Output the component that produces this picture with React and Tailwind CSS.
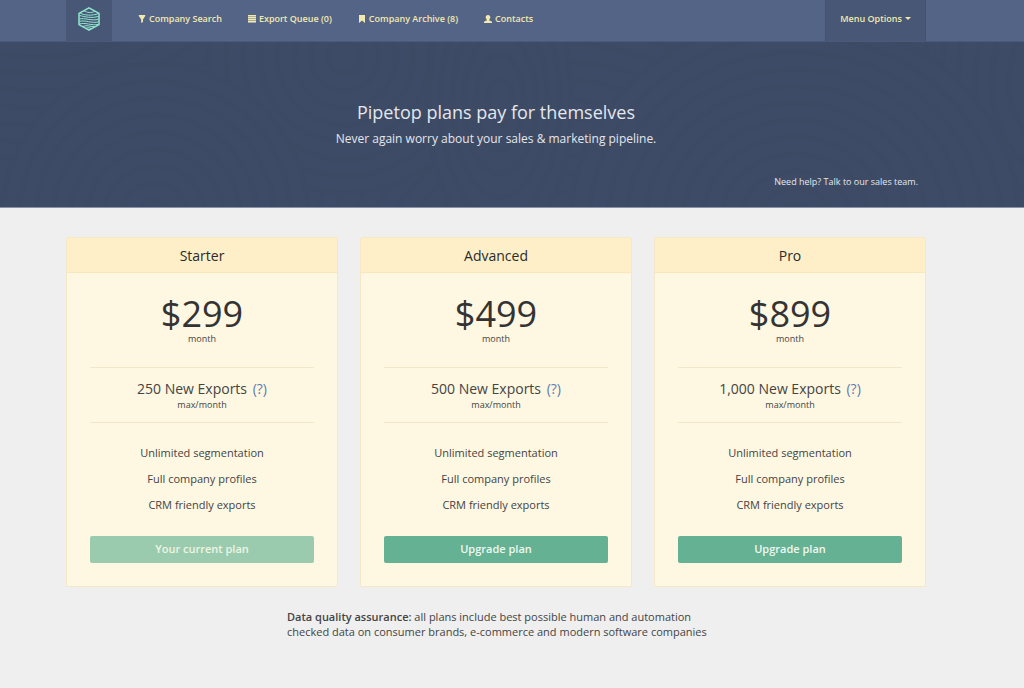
import React from 'react';

const navItems = [
  { label: 'Company Search', icon: 'filter' },
  { label: 'Export Queue (0)', icon: 'list' },
  { label: 'Company Archive (8)', icon: 'bookmark' },
  { label: 'Contacts', icon: 'user' },
];

const plans = [
  { name: 'Starter', price: '$299', exports: '250', current: true },
  { name: 'Advanced', price: '$499', exports: '500', current: false },
  { name: 'Pro', price: '$899', exports: '1,000', current: false },
];

const features = ['Unlimited segmentation', 'Full company profiles', 'CRM friendly exports'];

// Later groups are painted over earlier ones
const swirls = [
  { cx: 560, cy: 300, rx: 1, ry: 1.1, rings: 17 },
  { cx: 40, cy: -70, rx: 1.6, ry: 1, rings: 11 },
  { cx: 1060, cy: 40, rx: 1, ry: 1.4, rings: 10 },
  { cx: 345, cy: 15, rx: 1, ry: 1, rings: 8 },
  { cx: 500, cy: 60, rx: 0.7, ry: 1.4, rings: 6 },
  { cx: 155, cy: 175, rx: 1, ry: 1, rings: 9 },
  { cx: 795, cy: 180, rx: 1.1, ry: 1, rings: 12 },
];

const NavIcon = ({ name }) => {
  if (name === 'filter') {
    return (
      <svg className="w-2 h-2 fill-current" viewBox="0 0 8 8" aria-hidden="true">
        <path d="M0.8 0h6.4v1L5 4.5V7L3.2 8V4.5L0.8 1z" />
      </svg>
    );
  }
  if (name === 'list') {
    return (
      <svg className="w-2 h-2 fill-current" viewBox="0 0 8 8" aria-hidden="true">
        <path d="M0 0h8v8H0z" opacity="0.55" />
        <path d="M0 0h8v1H0zM0 2h8v1H0zM0 4h8v1H0zM0 6h8v1H0z" />
      </svg>
    );
  }
  if (name === 'bookmark') {
    return (
      <svg className="w-2 h-2 fill-current" viewBox="0 0 8 8" aria-hidden="true">
        <path d="M1 0h6v8L4 5.6L1 8z" />
      </svg>
    );
  }
  return (
    <svg className="w-2 h-2 fill-current" viewBox="0 0 8 8" aria-hidden="true">
      <path d="M4 0C5.6 0 6.3 1 6.3 2.3C6.3 3.4 5.8 4 5.3 4.6V5.5C6.5 6 8 6.2 8 7.2V8H0V7.2C0 6.2 1.5 6 2.7 5.5V4.6C2.2 4 1.7 3.4 1.7 2.3C1.7 1 2.4 0 4 0z" />
    </svg>
  );
};

const Logo = () => (
  <svg className="w-6 h-6" viewBox="0 0 24 24" fill="none" stroke="#92e8cf" aria-hidden="true">
    <path d="M12 0.8L22 6.3V17.7L12 23.2L2 17.7V6.3z" strokeWidth="1.5" strokeLinejoin="round" />
    <path d="M7 3.8C10 5.6 14 6.2 18 4.4M3 6C7 8.4 15 9 21.5 6.6M2.5 8.4C8 10 15 11.4 21.5 9.4M2.5 12C7 10.4 15 14.4 21.5 12.2M2.5 14.4C8 12.6 15 16.8 21.5 14.8M2.5 17C8 15 15 19 21 17.4M6 19.4C10 17.6 14 20 17.6 19.6M9 21.2C11 20.4 13 21 14.6 21.4" strokeWidth="1" />
  </svg>
);

const Navbar = () => (
  <nav className="bg-[#546487] border-b border-[#4b5a7c] pr-8 text-[9px] font-semibold text-[#f2e9ae]">
    <div className="max-w-[860px] mx-auto h-[41px] flex items-stretch">
      <a href="#" aria-label="Pipetop" className="w-[46px] bg-[#485775] flex justify-center pt-[7px]">
        <Logo />
      </a>
      <div className="flex gap-[26px] pl-[26px] pb-1 items-center">
        {navItems.map((item) => (
          <a key={item.label} href="#" className="flex items-center gap-[3px] whitespace-nowrap">
            <NavIcon name={item.icon} />
            {item.label}
          </a>
        ))}
      </div>
      <button className="ml-auto w-[101px] pb-1 bg-[#485775] border-x border-[#43516d] flex items-center justify-center gap-[3px] cursor-pointer">
        Menu Options
        <svg className="w-[6px] h-[3px] fill-current" viewBox="0 0 6 3" aria-hidden="true">
          <path d="M0 0h6L3 3z" />
        </svg>
      </button>
    </div>
  </nav>
);

const Hero = () => (
  <header className="relative bg-[#3e4b66] border-b border-[#8a90a6] pr-8 text-[#e4e7ec]">
    <svg
      className="absolute inset-0 w-full h-full"
      viewBox="0 0 1024 165"
      preserveAspectRatio="xMidYMid slice"
      fill="#3e4b66"
      stroke="#3d4a64"
      strokeWidth="5"
      aria-hidden="true"
    >
      {swirls.map((s) =>
        Array.from({ length: s.rings }, (_, i) => {
          const r = (s.rings - i) * 17;
          return <ellipse key={`${s.cx}-${i}`} cx={s.cx} cy={s.cy} rx={r * s.rx} ry={r * s.ry} />;
        })
      )}
    </svg>
    <div className="relative max-w-[860px] mx-auto pt-[58px] pb-[17px] text-center">
      <h1 className="text-[18px] leading-6">Pipetop plans pay for themselves</h1>
      <p className="mt-1 text-[12px] leading-[22px]">Never again worry about your sales &amp; marketing pipeline.</p>
      <p className="mt-6 pr-2 text-right text-[9px] leading-4">
        <a href="#">Need help? Talk to our sales team.</a>
      </p>
    </div>
  </header>
);

const PlanCard = ({ plan }) => (
  <section className="bg-[#fef7e1] border border-[#f6e8c6] rounded-xs text-center">
    <h2 className="h-[35px] bg-[#feefc8] border-b border-[#f8e6bd] text-[14px] leading-[35px] text-[#2b2b2b]">{plan.name}</h2>
    <div className="px-[23px] pb-[23px]">
      {/* Price */}
      <div className="pt-[22px] pb-[22px] border-b border-[#f3e7cb]">
        <p className="text-[36px] leading-[38px] text-[#333333]">{plan.price}</p>
        <p className="text-[9px] leading-3">month</p>
      </div>

      {/* Exports */}
      <div className="pt-[11px] pb-[11px] border-b border-[#f3e7cb]">
        <p className="text-[14px] leading-5">
          {plan.exports} New Exports <a href="#" className="ml-[2px] text-[#5e7bb8]">(?)</a>
        </p>
        <p className="text-[9px] leading-3">max/month</p>
      </div>

      {/* Features */}
      <ul className="pt-[17px] pb-[18px] text-[11px]">
        {features.map((feature) => (
          <li key={feature} className="leading-[26px]">{feature}</li>
        ))}
      </ul>

      {plan.current ? (
        <button className="block w-full h-[27px] rounded-xs bg-[#9acbae] text-[11px] font-semibold text-[#eef5e4]">Your current plan</button>
      ) : (
        <button className="block w-full h-[27px] rounded-xs bg-[#65b193] text-[11px] font-semibold text-[#eff8f2] cursor-pointer">Upgrade plan</button>
      )}
    </div>
  </section>
);

const App = () => {
  return (
    <div className="min-h-screen bg-[#efefef] text-[#444444] font-['Open_Sans','Noto_Sans',sans-serif]">
      <Navbar />
      <Hero />
      <main className="pt-[29px] pr-8 pb-8">
        <div className="max-w-[860px] mx-auto grid grid-cols-3 gap-[22px]">
          {plans.map((plan) => (
            <PlanCard key={plan.name} plan={plan} />
          ))}
        </div>
        <p className="w-[418px] mx-auto mt-[22px] text-[11px] leading-[15px] whitespace-nowrap">
          <strong className="font-semibold">Data quality assurance:</strong> all plans include best possible human and automation
          <br />
          checked data on consumer brands, e-commerce and modern software companies
        </p>
      </main>
    </div>
  );
};

export default App;
